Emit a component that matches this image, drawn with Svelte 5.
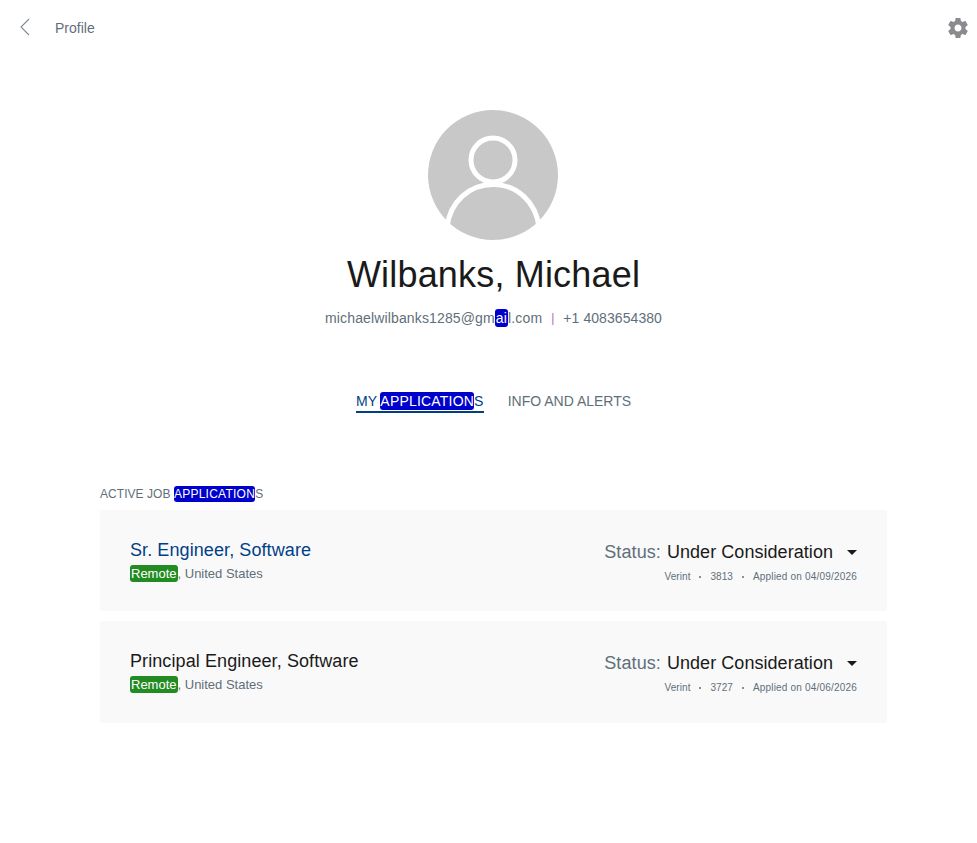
<script>
  const applications = [
    { title: 'Sr. Engineer, Software', active: true, id: '3813', applied: '04/09/2026' },
    { title: 'Principal Engineer, Software', active: false, id: '3727', applied: '04/06/2026' }
  ];
</script>

<div class="page">
  <header class="topbar">
    <div class="back">
      <svg class="chevron" width="10" height="18" viewBox="0 0 10 18" fill="none" stroke="#7f8c94" stroke-width="1.1">
        <path d="M9 1 L1 9 L9 17" />
      </svg>
      <span class="crumb">Profile</span>
    </div>
    <svg class="gear" width="24" height="24" viewBox="0 0 24 24" fill="#8a8b8e">
      <path d="M19.43 12.98c.04-.32.07-.64.07-.98s-.03-.66-.07-.98l2.11-1.65c.19-.15.24-.42.12-.64l-2-3.46c-.12-.22-.39-.3-.61-.22l-2.49 1c-.52-.4-1.08-.73-1.69-.98l-.38-2.65C14.46 2.18 14.25 2 14 2h-4c-.25 0-.46.18-.49.42l-.38 2.65c-.61.25-1.17.59-1.69.98l-2.49-1c-.23-.09-.49 0-.61.22l-2 3.46c-.13.22-.07.49.12.64l2.11 1.65c-.04.32-.07.65-.07.98s.03.66.07.98l-2.11 1.65c-.19.15-.24.42-.12.64l2 3.46c.12.22.39.3.61.22l2.49-1c.52.4 1.08.73 1.69.98l.38 2.65c.03.24.24.42.49.42h4c.25 0 .46-.18.49-.42l.38-2.65c.61-.25 1.17-.59 1.69-.98l2.49 1c.23.09.49 0 .61-.22l2-3.46c.12-.22.07-.49-.12-.64l-2.11-1.65zM12 15.5c-1.93 0-3.5-1.57-3.5-3.5s1.57-3.5 3.5-3.5 3.5 1.57 3.5 3.5-1.57 3.5-3.5 3.5z" />
    </svg>
  </header>

  <section class="profile">
    <svg class="avatar" width="130" height="130" viewBox="0 0 130 130">
      <circle cx="65" cy="65" r="65" fill="#c8c8c8" />
      <circle cx="65" cy="50" r="22" fill="none" stroke="#fff" stroke-width="5" />
      <path d="M19 117 C22 92 41 74.5 65 74.5 C89 74.5 108 92 111 117" fill="none" stroke="#fff" stroke-width="5" />
    </svg>
    <h1>Wilbanks, Michael</h1>
    <p class="contact">
      <span class="email">michaelwilbanks1285@gm<mark>ai</mark>l.com</span>
      <span class="pipe">|</span>
      <span class="phone">+1 4083654380</span>
    </p>
  </section>

  <nav class="tabs">
    <span class="tab current">MY <mark>APPLICATION</mark>S</span>
    <span class="tab">INFO AND ALERTS</span>
  </nav>

  <main class="list">
    <div class="label">ACTIVE JOB <mark>APPLICATION</mark>S</div>
    {#each applications as app}
      <article class="card">
        <div class="left">
          <div class="title" class:link={app.active}>{app.title}</div>
          <div class="place"><mark class="remote">Remote</mark>, United States</div>
        </div>
        <div class="right">
          <div class="status">
            <span class="key">Status:</span>
            <span class="value">Under Consideration</span>
            <span class="caret"></span>
          </div>
          <div class="meta">
            <span>Verint</span><span class="dot"></span><span>{app.id}</span><span class="dot"></span><span class="applied">Applied on {app.applied}</span>
          </div>
        </div>
      </article>
    {/each}
  </main>
</div>

<style>
  :global(body) {
    background: #fff;
    font-family: "Liberation Sans", Arial, sans-serif;
  }

  .page {
    min-height: 843px;
    box-sizing: border-box;
  }

  .topbar {
    height: 56px;
    display: flex;
    justify-content: space-between;
    align-items: center;
    padding: 0 7px 0 20px;
  }

  .back {
    display: flex;
    align-items: center;
    gap: 25px;
  }

  .chevron {
    margin-bottom: 2px;
  }

  .crumb {
    font-size: 14px;
    color: #5f6f7a;
  }

  .profile {
    display: flex;
    flex-direction: column;
    align-items: center;
    padding: 54px 0 0 10px;
  }

  .avatar {
    margin-right: 1px;
  }

  h1 {
    margin: 14px 0 0;
    font-size: 36px;
    line-height: 42px;
    font-weight: 400;
    letter-spacing: 0.18px;
    color: #1a1a1a;
  }

  .contact {
    margin: 14px 0 0;
    font-size: 14px;
    line-height: 16px;
    color: #5f6f7a;
    display: flex;
    gap: 9px;
  }

  .email {
    letter-spacing: 0.14px;
  }

  .email mark {
    padding: 1px;
  }

  .phone {
    letter-spacing: 0.07px;
  }

  .pipe {
    color: #a070b0;
    font-size: 12px;
  }

  mark {
    background: #0000cd;
    color: #fff;
    border-radius: 3px;
    padding: 1px 0;
  }

  .tabs {
    display: flex;
    justify-content: center;
    gap: 24px;
    margin-top: 67px;
    padding-left: 10px;
    font-size: 14px;
    line-height: 16px;
  }

  .tab {
    color: #5f6f7a;
    padding-bottom: 2px;
  }

  .tab.current {
    color: #003f87;
    letter-spacing: 0.2px;
    border-bottom: 2px solid #003f87;
  }

  .list {
    margin: 74px 90px 0 100px;
  }

  .label {
    font-size: 12px;
    line-height: 14px;
    letter-spacing: 0.05px;
    color: #5f6f7a;
    margin-bottom: 9px;
  }

  .label mark {
    letter-spacing: 0.25px;
  }

  .card {
    height: 101.4px;
    box-sizing: border-box;
    background: #f9f9f9;
    margin-bottom: 10px;
    padding: 30px 30px 0;
    display: flex;
    justify-content: space-between;
  }

  .title {
    font-size: 18px;
    line-height: 21px;
    letter-spacing: 0.09px;
    color: #1a1a1a;
  }

  .title.link {
    color: #003f87;
  }

  .place {
    font-size: 13px;
    line-height: 14px;
    margin-top: 6px;
    color: #5f6f7a;
  }

  .remote {
    background: #228b22;
    padding: 1px;
  }

  .right {
    display: flex;
    flex-direction: column;
    align-items: flex-end;
  }

  .status {
    font-size: 18px;
    line-height: 22px;
    margin-top: 1px;
    display: flex;
    align-items: center;
  }

  .key {
    color: #5f6f7a;
    letter-spacing: 0.1px;
    margin-right: 6px;
  }

  .value {
    color: #1a1a1a;
    letter-spacing: 0.05px;
  }

  .caret {
    margin-left: 14px;
    border-left: 5.5px solid transparent;
    border-right: 5.5px solid transparent;
    border-top: 5.5px solid #1a1a1a;
  }

  .meta {
    font-size: 10px;
    line-height: 12px;
    letter-spacing: 0.05px;
    margin-top: 8px;
    color: #5f6f7a;
    display: flex;
    align-items: center;
    gap: 9px;
  }

  .applied {
    letter-spacing: 0.19px;
  }

  .dot {
    width: 2px;
    height: 2px;
    background: #5f6f7a;
    border-radius: 50%;
  }
</style>
